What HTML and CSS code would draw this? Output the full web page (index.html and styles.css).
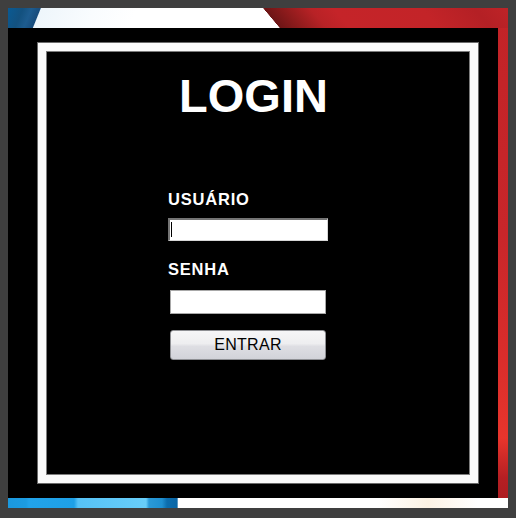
FILE: index.html
```html
<!DOCTYPE html>
<html lang="pt">
<head>
<meta charset="utf-8">
<title>Login</title>
<link rel="stylesheet" href="styles.css">
</head>
<body>
<div class="window">
  <div class="backdrop">
    <div class="panel">
      <div class="frame">
        <h1 class="title">LOGIN</h1>
        <form class="login-form">
          <label class="field-label" for="user">USUÁRIO</label>
          <span class="field-wrap">
            <input class="field field-inset" id="user" type="text">
          </span>
          <label class="field-label field-label-second" for="pass">SENHA</label>
          <input class="field field-flat" id="pass" type="password">
          <button class="submit" type="button">ENTRAR</button>
        </form>
      </div>
    </div>
  </div>
</div>
</body>
</html>
```

FILE: styles.css
```css
html, body {
  margin: 0;
  padding: 0;
  background: #3f3f3f;
}

.window {
  width: 516px;
  height: 518px;
  box-sizing: border-box;
  padding: 8px 8px 10px 8px;
  background: #3f3f3f;
}

.backdrop {
  width: 500px;
  height: 500px;
  box-sizing: border-box;
  padding: 20px 10px 10px 0;
  background:
    linear-gradient(50deg, transparent 208px, #6d1516 208.5px, #8e1b1c 224px, #b82226 244px, #c52429 262px, #c32428 330px, #b42025 370px, #bd2327 392px) top / 100% 20px no-repeat,
    linear-gradient(112deg, #0a5a93 0, #13517f 14px, #1d5c8f 22px, #184c7c 30px, #eef6fb 31px, #f9fcfe 80px, #ffffff 120px) top / 100% 20px no-repeat,
    linear-gradient(to right, #1b98de 0, #1c9ce2 18px, #22a3ea 21px, #1ea0e6 66px, #56c2f6 70px, #68cefa 138px, #2a9ad8 141px, #1f90d1 154px, #0c6dae 159px, #0a66a6 169px, #ffffff 170.5px, #ffffff 370px, #fcf2e4 420px, #ffffff 470px) bottom / 100% 10px no-repeat,
    linear-gradient(to bottom, #c22327 0, #c8262a 45%, #d92d2b 70%, #e8352c 86%, #b51f23 94%, #a91c20 100%);
}

.panel {
  width: 490px;
  height: 470px;
  box-sizing: border-box;
  padding: 15px 0 0 30px;
  background: #000;
}

.frame {
  width: 440px;
  height: 440px;
  box-sizing: border-box;
  border: 8px solid #fafafa;
  box-shadow: inset 0 0 0 1px #7d7d7d, 0 0 0 1px #6a6a6a;
  background: #000;
  display: flex;
  flex-direction: column;
}

.title {
  margin: 0;
  padding: 21px 9px 0 0;
  text-align: center;
  font-family: "Liberation Sans", Arial, sans-serif;
  font-weight: bold;
  font-size: 47px;
  line-height: 48px;
  color: #ffffff;
}

.login-form {
  margin: 69px 0 0 122px;
  width: 160px;
  display: flex;
  flex-direction: column;
  align-items: flex-start;
}

.field-label {
  display: block;
  font-family: "Liberation Sans", Arial, sans-serif;
  font-weight: bold;
  font-size: 16.5px;
  letter-spacing: 0.8px;
  line-height: 20px;
  color: #ffffff;
}

.field-label-second {
  margin-top: 18px;
}

.field-wrap {
  position: relative;
  display: block;
  margin-top: 9px;
  width: 160px;
  height: 23px;
}

.field-wrap::after {
  content: "";
  position: absolute;
  left: 3px;
  top: 4px;
  width: 1px;
  height: 15px;
  background: #000;
}

.field {
  display: block;
  box-sizing: border-box;
  margin: 0;
  padding: 0;
  background: #ffffff;
  outline: none;
}

.field-inset {
  width: 160px;
  height: 23px;
  border-style: solid;
  border-width: 2px 1px 1px 2px;
  border-color: #747474 #d6d6d6 #d6d6d6 #747474;
}

.field-flat {
  margin: 11px 0 0 2px;
  width: 156px;
  height: 24px;
  border: 1px solid #a8a8a8;
}

.submit {
  margin: 16px 0 0 2px;
  width: 156px;
  height: 30px;
  box-sizing: border-box;
  padding: 0;
  border: 1px solid #8e8f93;
  border-radius: 3px;
  background: linear-gradient(to bottom, #f6f6f7 0, #eeeef0 45%, #dedee3 55%, #d2d3d9 100%);
  font-family: "Liberation Sans", Arial, sans-serif;
  font-size: 16px;
  letter-spacing: 0.3px;
  line-height: 28px;
  color: #000;
}
```
